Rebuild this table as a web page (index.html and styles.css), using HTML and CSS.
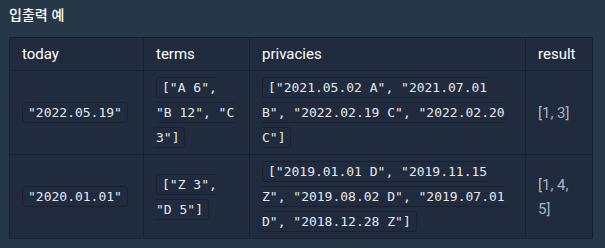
FILE: index.html
```html
<!DOCTYPE html>
<html lang="ko">
<head>
<meta charset="utf-8">
<link rel="stylesheet" href="styles.css">
</head>
<body>
<h5 class="title">입출력 예</h5>
<table class="io">
  <colgroup>
    <col class="c-today">
    <col class="c-terms">
    <col class="c-priv">
    <col class="c-result">
  </colgroup>
  <thead>
    <tr><th>today</th><th>terms</th><th>privacies</th><th>result</th></tr>
  </thead>
  <tbody>
    <tr>
      <td><code>"2022.05.19"</code></td>
      <td><code>["A 6", "B 12", "C 3"]</code></td>
      <td><code>["2021.05.02 A", "2021.07.01 B", "2022.02.19 C", "2022.02.20 C"]</code></td>
      <td class="res">[1, 3]</td>
    </tr>
    <tr>
      <td><code>"2020.01.01"</code></td>
      <td><code>["Z 3", "D 5"]</code></td>
      <td><code>["2019.01.01 D", "2019.11.15 Z", "2019.08.02 D", "2019.07.01 D", "2018.12.28 Z"]</code></td>
      <td class="res">[1, 4, 5]</td>
    </tr>
  </tbody>
</table>
</body>
</html>
```
FILE: styles.css
```css
html, body {
  margin: 0;
  background: #263747;
}
body {
  padding: 0 9px;
  font-family: Roboto, "Noto Sans CJK KR", sans-serif;
  color: #ffffff;
}
.title {
  margin: 0;
  padding-top: 5px;
  height: 37px;
  box-sizing: border-box;
  font-size: 14px;
  line-height: 18px;
  font-weight: 500;
  font-family: "Noto Sans CJK KR", sans-serif;
  color: #ffffff;
}
.io {
  width: 583px;
  table-layout: fixed;
  border-collapse: collapse;
  background: #202b3d;
  border: 1px solid #172030;
  font-size: 15px;
  line-height: 24px;
}
.c-today { width: 134px; }
.c-terms { width: 106px; }
.c-priv { width: 276px; }
.c-result { width: 67px; }
.io th, .io td {
  border: 1px solid #172030;
  padding: 4px 12px;
  text-align: left;
  vertical-align: middle;
  font-weight: 400;
}
.io th {
  color: #ffffff;
}
.io code {
  font-family: "DejaVu Sans Mono", monospace;
  font-size: 13px;
  color: #e4e8ee;
  background: #202b3d;
  border: 1px solid #172131;
  border-radius: 4px;
  padding: 2px 5px;
}
.res {
  color: #a6b4c4;
  font-weight: 300;
}
```
